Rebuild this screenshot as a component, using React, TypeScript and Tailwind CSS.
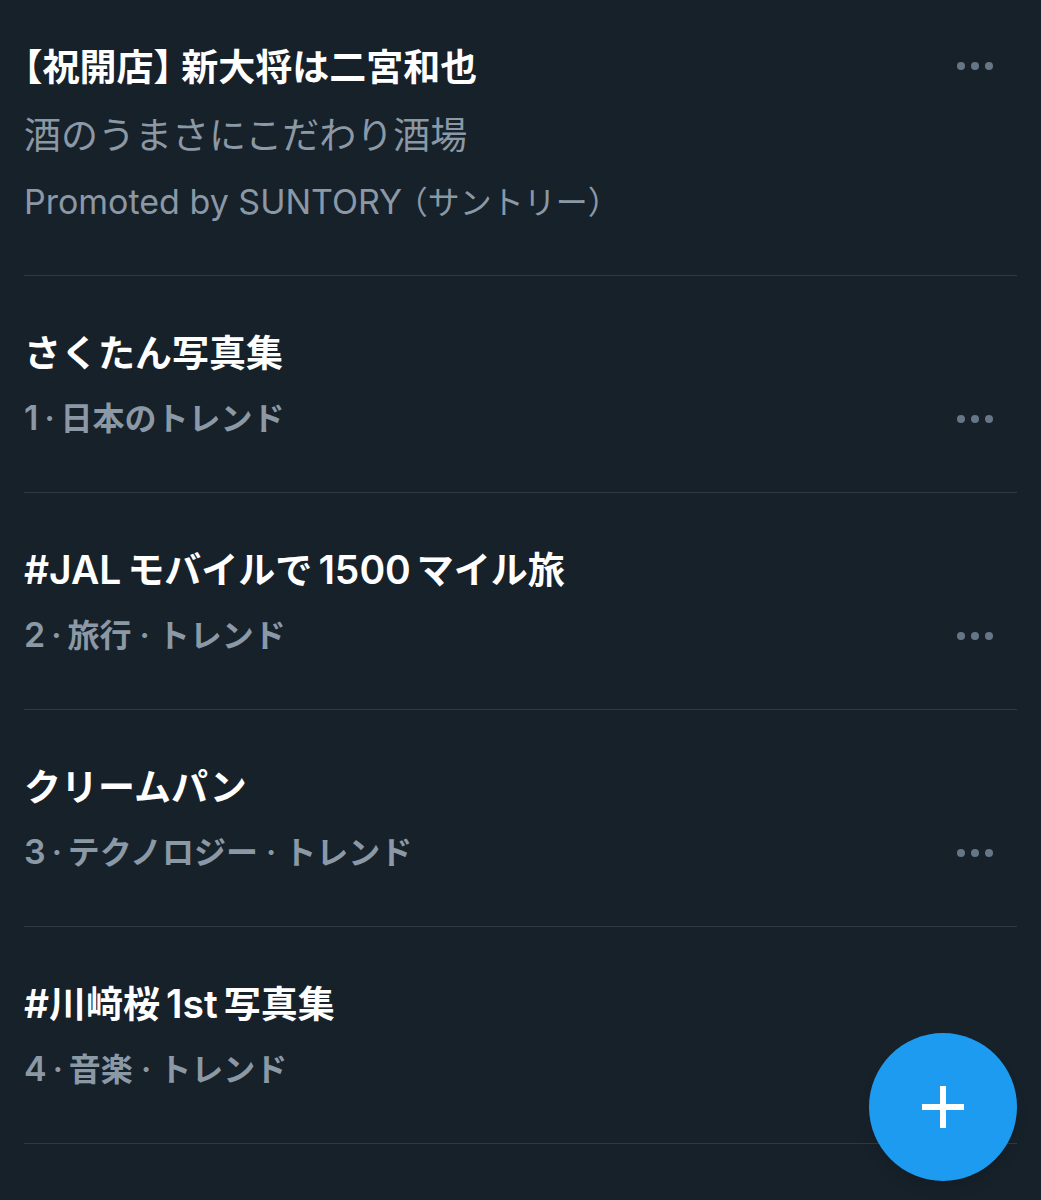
interface Trend {
  rank: number;
  title: string;
  category: string;
}

const trends: Trend[] = [
  { rank: 1, title: "さくたん写真集", category: "日本のトレンド" },
  { rank: 2, title: "#JALモバイルで1500マイル旅", category: "旅行 · トレンド" },
  { rank: 3, title: "クリームパン", category: "テクノロジー · トレンド" },
  { rank: 4, title: "#川﨑桜1st写真集", category: "音楽 · トレンド" },
];

function latinSpacing(part: string) {
  if (part === "#") return "";
  return part.startsWith("#") ? "mr-1.5" : "mx-1.5";
}

// Latin runs are set slightly larger than the Japanese around them
function TrendTitle({ text }: { text: string }) {
  return (
    <h2 className="text-[37px] leading-14 font-semibold text-white">
      {text.split(/([#A-Za-z0-9]+)/).map((part, i) =>
        i % 2 === 1 ? (
          <span key={i} className={`text-[39px] leading-none ${latinSpacing(part)}`}>
            {part}
          </span>
        ) : (
          part
        )
      )}
    </h2>
  );
}

function MoreButton({ label }: { label: string }) {
  return (
    <button className="flex h-11 shrink-0 items-center" aria-label={label}>
      <svg width="36" height="8" viewBox="0 0 36 8" fill="#657786" aria-hidden="true">
        <circle cx="4" cy="4" r="4" />
        <circle cx="18" cy="4" r="4" />
        <circle cx="32" cy="4" r="4" />
      </svg>
    </button>
  );
}

function PromotedTrend() {
  return (
    <li className="flex items-start justify-between border-b border-[#2e3943] pt-10 pr-6 pb-[50px]">
      <div>
        <h2 className="text-[37px] leading-14 font-semibold text-white">
          <span className="[font-feature-settings:'halt']">【祝開店】</span> 新大将は二宮和也
        </h2>
        <p className="mt-4 text-[37px] leading-12">酒のうまさにこだわり酒場</p>
        <p className="mt-[21px] text-[32px] leading-11">
          <span className="text-[34px] leading-none">Promoted by SUNTORY </span>
          <span className="[font-feature-settings:'halt']">（サントリー）</span>
        </p>
      </div>
      <div className="pt-1">
        <MoreButton label="More options for promoted trend" />
      </div>
    </li>
  );
}

function TrendItem({ rank, title, category }: Trend) {
  return (
    <li className="border-b border-[#2e3943] pt-[50px] pr-6 pb-[51px]">
      <TrendTitle text={title} />
      <div className="mt-[15px] flex items-center justify-between">
        <p className="text-[32px] leading-11 font-semibold">
          <span className="text-[34px] leading-none">{rank}</span>
          <span className="mx-1.5">·</span>
          {category}
        </p>
        <MoreButton label={`More options for ${title}`} />
      </div>
    </li>
  );
}

function App() {
  return (
    <main
      lang="ja"
      className="min-h-screen bg-[#17212a] px-6 font-['Inter','Noto_Sans_CJK_JP',sans-serif] text-[#8b98a5]"
    >
      <ul>
        <PromotedTrend />
        {trends.map((trend) => (
          <TrendItem key={trend.rank} {...trend} />
        ))}
      </ul>

      <button
        aria-label="Compose"
        className="fixed right-6 bottom-[19px] flex size-[148px] items-center justify-center rounded-full bg-[#1d9bf0] shadow-lg"
      >
        <svg width="42" height="42" viewBox="0 0 42 42" fill="none" stroke="white" strokeWidth="6" aria-hidden="true">
          <path d="M21 0v42M0 21h42" />
        </svg>
      </button>
    </main>
  );
}

export default App;
